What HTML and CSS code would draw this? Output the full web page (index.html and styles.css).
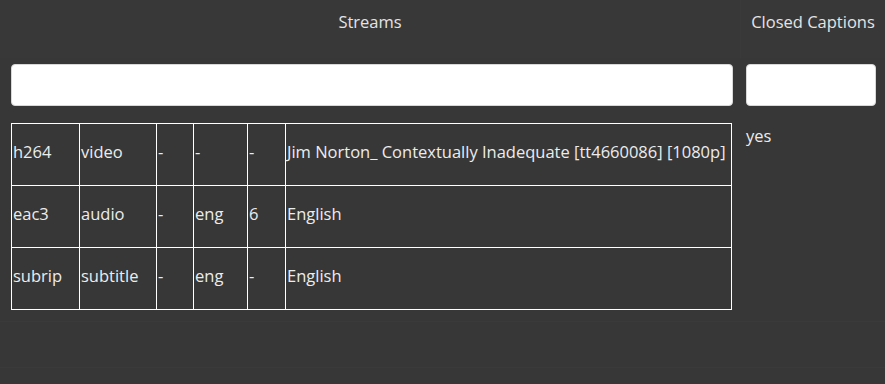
FILE: index.html
```html
<!DOCTYPE html>
<html lang="en">
<head>
    <meta charset="UTF-8">
    <meta name="viewport" content="width=device-width, initial-scale=1.0">
    <title>Streams</title>
    <link rel="stylesheet" href="styles.css">
</head>
<body>
    <div class="grid">
        <div class="head">Streams</div>
        <div class="head head-cc">Closed Captions</div>

        <div class="filter filter-streams"><input type="text"></div>
        <div class="filter filter-cc"><input type="text"></div>

        <div class="cell cell-streams">
            <table class="streams">
                <colgroup>
                    <col class="c-codec">
                    <col class="c-type">
                    <col class="c-dash">
                    <col class="c-lang">
                    <col class="c-chan">
                    <col class="c-title">
                </colgroup>
                <tr>
                    <td>h264</td>
                    <td>video</td>
                    <td>-</td>
                    <td>-</td>
                    <td>-</td>
                    <td>Jim Norton_ Contextually Inadequate [tt4660086] [1080p]</td>
                </tr>
                <tr>
                    <td>eac3</td>
                    <td>audio</td>
                    <td>-</td>
                    <td>eng</td>
                    <td>6</td>
                    <td>English</td>
                </tr>
                <tr>
                    <td>subrip</td>
                    <td>subtitle</td>
                    <td>-</td>
                    <td>eng</td>
                    <td>-</td>
                    <td>English</td>
                </tr>
            </table>
        </div>
        <div class="cell cell-cc">yes</div>

        <div class="footer"></div>
        <div class="footer"></div>
    </div>
</body>
</html>
```

FILE: styles.css
```css
body {
    margin: 0;
    padding: 0;
    font-family: "Open Sans", "Noto Sans", sans-serif;
    font-size: 16.5px;
    background-color: #373737;
    color: #ececec;
    height: 100vh;
}
.grid {
    display: grid;
    grid-template-columns: 740px 1fr;
    grid-template-rows: 58px 57px auto 47px;
}
.head {
    background-color: #383838;
    text-align: center;
    padding-top: 10px;
    line-height: 24px;
    color: #e4e4e4;
}
.head-cc {
    border-left: 1px solid #3a3a3a;
    white-space: nowrap;
}
.filter {
    padding-top: 6px;
}
.filter-streams {
    padding-left: 11px;
    padding-right: 7px;
}
.filter-cc {
    padding-left: 6px;
    padding-right: 9px;
}
.filter input {
    box-sizing: border-box;
    width: 100%;
    height: 42px;
    border: 1px solid #d8d8d8;
    border-radius: 4px;
    background-color: #fff;
    margin: 0;
}
.cell-streams {
    padding: 8px 9px 11px 11px;
}
.cell-cc {
    padding: 10px 6px;
    line-height: 22px;
}
.streams {
    border-collapse: collapse;
    table-layout: fixed;
    width: 721px;
}
.streams td {
    border: 1px solid #fff;
    height: 55px;
    padding: 0 0 6px 1px;
    vertical-align: middle;
    white-space: nowrap;
}
.c-codec { width: 68px; }
.c-type { width: 77px; }
.c-dash { width: 37px; }
.c-lang { width: 54px; }
.c-chan { width: 38px; }
.footer {
    border-top: 1px solid #3a3a3a;
    border-bottom: 1px solid #3a3a3a;
}
```
